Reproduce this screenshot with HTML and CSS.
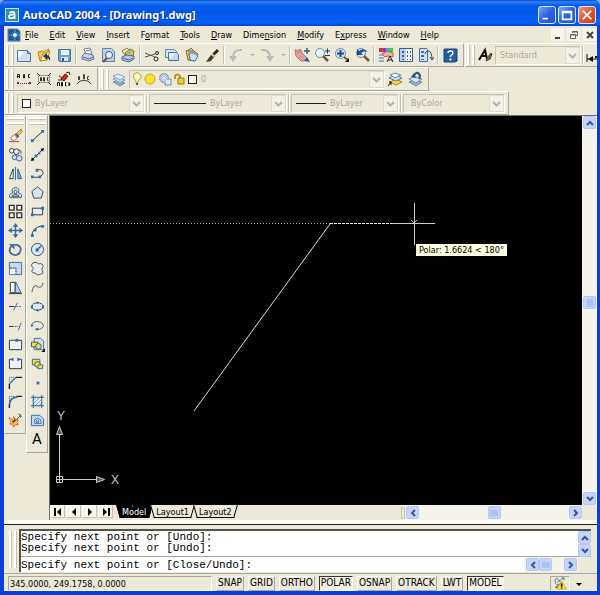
FILE: index.html
```html
<!DOCTYPE html>
<html lang="en">
<head>
    <meta charset="UTF-8">
    <title>AutoCAD 2004 - [Drawing1.dwg]</title>
    <link rel="stylesheet" href="styles.css">
</head>
<body>
    <div class="window">
        <header class="title">
            <svg class="logo" viewBox="0 0 16 16"><rect width="16" height="16" fill="#dff3fa"/><rect x="1" y="1" width="14" height="14" fill="#2a8fb0"/><path d="M5 5.500Q11 2.500 11 7V12.500M11 7.500Q4.500 7 4.500 10T11 10.500" fill="none" stroke="#fff" stroke-width="2"/></svg>
            <h1>AutoCAD 2004 - [Drawing1.dwg]</h1>
            <div class="controls">
                <button aria-label="Minimize"><svg viewBox="0 0 16 16"><path d="M3 11h6v2H3z" fill="#fff"/></svg></button>
                <button aria-label="Maximize"><svg viewBox="0 0 16 16"><path d="M3 4h10v9H3zM3 5h10" fill="none" stroke="#fff" stroke-width="2"/></svg></button>
                <button class="close" aria-label="Close"><svg viewBox="0 0 16 16"><path d="M3 3l10 10M13 3L3 13" stroke="#fff" stroke-width="2"/></svg></button>
            </div>
        </header>

        <nav class="menu">
            <svg class="doc" viewBox="0 0 16 16"><path d="M1 1h11l3 3v11H1z" fill="#1c5792" stroke="#7b9cb8"/><path d="M9 2v12M3 8h12M6 5l6 6M12 5l-6 6" stroke="#62c8f5"/><path d="M7 8h4M9 6v4" stroke="#fff" stroke-width="2"/></svg>
            <a href="#"><u>F</u>ile</a>
            <a href="#"><u>E</u>dit</a>
            <a href="#"><u>V</u>iew</a>
            <a href="#"><u>I</u>nsert</a>
            <a href="#">F<u>o</u>rmat</a>
            <a href="#"><u>T</u>ools</a>
            <a href="#"><u>D</u>raw</a>
            <a href="#">Dime<u>n</u>sion</a>
            <a href="#"><u>M</u>odify</a>
            <a href="#">E<u>x</u>press</a>
            <a href="#"><u>W</u>indow</a>
            <a href="#"><u>H</u>elp</a>
            <div class="mdi">
                <button aria-label="Minimize drawing"><svg viewBox="0 0 12 12"><path d="M3 9h5" stroke="#444" stroke-width="2"/></svg></button>
                <button aria-label="Restore drawing"><svg viewBox="0 0 12 12"><path d="M4.500 4V2.500h5v4H8M2.500 5.500h5v4h-5zM4 3h6M2 6h6" fill="none" stroke="#666"/></svg></button>
                <button aria-label="Close drawing"><svg viewBox="0 0 12 12"><path d="M3 3l6 6M9 3L3 9" stroke="#444" stroke-width="2"/></svg></button>
            </div>
        </nav>

        <div class="row">
            <div class="bar">
                <span class="grip"></span>
                <button aria-label="New"><svg viewBox="0 0 16 16"><path d="M1.500 3.500h10l3 3v8h-13z" fill="#cfe1f7" stroke="#4b78ad"/><path d="M2 4h7l-6 7z" fill="#fff"/><path d="M11.500 3.500v3h3" fill="#8db2dc" stroke="#4b78ad"/></svg></button>
                <button aria-label="Open"><svg viewBox="0 0 16 16"><path d="M2 5l3-1 2 1 6-3-2 11-7 1z" fill="#f7cc4a" stroke="#b58a24"/><path d="M4 14l3-7 7-3-3 9z" fill="#ffe895" stroke="#b58a24"/><path d="M7 9l4-3v2q4 1 3 6-1-3-3-3v2z" fill="#1d3e68"/></svg></button>
                <button aria-label="Save"><svg viewBox="0 0 16 16"><path d="M2.500 2.500h12v12h-11l-1-1z" fill="#6fa0d3" stroke="#3f72aa"/><path d="M5 3h8v5H5z" fill="#e9f2fb"/><path d="M5 10h7v4H5z" fill="#d6e4f3"/><path d="M6 11h2v3H6z" fill="#27598f"/></svg></button>
                <span class="sep"></span>
                <button aria-label="Plot"><svg viewBox="0 0 16 16"><path d="M4 2l6-1 2 6-6 1z" fill="#fff" stroke="#6e7f9c"/><path d="M2 9l3-3 8 2 1 4-5 2-7-2z" fill="#c8d4e7" stroke="#61738f"/><path d="M3 10l6 2 4-2M6 4l4-1" fill="none" stroke="#526684"/></svg></button>
                <button aria-label="Plot preview"><svg viewBox="0 0 16 16"><path d="M2.500 1.500h9l3 3v10h-12z" fill="#bcd3ee" stroke="#5f83ac"/><circle cx="9" cy="8" r="3.500" fill="#e8f4fd" stroke="#3e5673"/><path d="M7 11l-4 4" stroke="#6d5038" stroke-width="2"/></svg></button>
                <button aria-label="Publish"><svg viewBox="0 0 16 16"><path d="M2 4l5-3 3 3-5 4z" fill="#fff3ae" stroke="#8d7c29"/><path d="M5 6l5-4 4 2-1 5-5 1z" fill="#f2c32c" stroke="#8a6e20"/><circle cx="9" cy="5" r="2" fill="#6dbaf0"/><path d="M2 10l4-2 8 1v3l-5 3-7-2z" fill="#b7cbe5" stroke="#476a95"/><path d="M3 11l6 2 4-2" fill="none" stroke="#476a95"/></svg></button>
                <span class="sep"></span>
                <button aria-label="Cut"><svg viewBox="0 0 16 16"><path d="M1 6l10 4M1 10l10-3" fill="none" stroke="#555"/><circle cx="13" cy="6" r="1.500" fill="none" stroke="#222"/><circle cx="12" cy="12" r="2" fill="none" stroke="#222"/></svg></button>
                <button aria-label="Copy"><svg viewBox="0 0 16 16"><path d="M1.500 2.500h9l2 2v6h-11z" fill="#d9e8f8" stroke="#5786ba"/><path d="M4.500 5.500h8l2 2v6h-10z" fill="#c3d9f2" stroke="#4174aa"/><path d="M5 6h6l-5 6z" fill="#f5faff"/></svg></button>
                <button aria-label="Paste"><svg viewBox="0 0 16 16"><path d="M2 4l5-2 7 5-3 7-7-1z" fill="#f4bd43" stroke="#8a6929"/><path d="M5 6h5l4 3-3 5-5-1z" fill="#cae0f8" stroke="#4978a6"/><path d="M4 4l3-3 3 3z" fill="#bfc9d2" stroke="#61717d"/></svg></button>
                <button aria-label="Match properties"><svg viewBox="0 0 16 16"><path d="M9 8l5-5" stroke="#402515" stroke-width="3"/><path d="M7 8l3 2-3 4-5 1 2-3z" fill="#4b3830"/><path d="M8 7l3 3" stroke="#c6b9a7" stroke-width="2"/></svg></button>
                <span class="sep"></span>
                <button aria-label="Undo" disabled><svg viewBox="0 0 16 16"><path d="M14 3Q5 2 5 11" fill="none" stroke="#b8b9bb" stroke-width="2"/><path d="M1 9h8l-4 6z" fill="#b8b9bb"/></svg></button>
                <button class="drop" aria-label="Undo list" disabled><svg viewBox="0 0 8 16"><path d="M2 7h5L4.500 9z" fill="#a8b0bc"/></svg></button>
                <button aria-label="Redo" disabled><svg viewBox="0 0 16 16"><path d="M2 3Q11 2 11 11" fill="none" stroke="#b8b9bb" stroke-width="2"/><path d="M7 9h8l-4 6z" fill="#b8b9bb"/></svg></button>
                <button class="drop" aria-label="Redo list" disabled><svg viewBox="0 0 8 16"><path d="M2 7h5L4.500 9z" fill="#a8b0bc"/></svg></button>
                <span class="sep"></span>
                <button aria-label="Pan"><svg viewBox="0 0 16 16"><path d="M1 3l2 0 2 3V2l2 1 1 3 3 3 2 2-3 3H7L2 9z" fill="#dba197" stroke="#b8766d"/><path d="M10 4h6M13 1v6" stroke="#315c94" stroke-width="1.500"/><path d="M10 14l3-4 3 5z" fill="#315c94"/></svg></button>
                <button aria-label="Zoom realtime"><svg viewBox="0 0 16 16"><circle cx="6" cy="6" r="4.500" fill="#e5f1fb" stroke="#7490ae"/><path d="M9 9l5 5" stroke="#775737" stroke-width="2.500"/><path d="M11 4h5M13.500 1.500v5M11 8.500h5" stroke="#173c6e"/></svg></button>
                <button aria-label="Zoom window"><svg viewBox="0 0 16 16"><circle cx="6.500" cy="6.500" r="5" fill="#cfe2f6" stroke="#7289a7"/><path d="M3 6.500h7M6.500 3v7" stroke="#1f4d82" stroke-width="2"/><path d="M10 10l4 3" stroke="#775737" stroke-width="2"/><path d="M15 11v4h-4z" fill="#111"/></svg></button>
                <button aria-label="Zoom previous"><svg viewBox="0 0 16 16"><circle cx="7" cy="6" r="4.500" fill="#dae8f4" stroke="#7289a7"/><path d="M10 9l5 5" stroke="#775737" stroke-width="2.500"/><path d="M3 8V2l2 2q5-4 9 1-4-2-7 1l2 2z" fill="#204f86"/></svg></button>
                <span class="sep"></span>
                <button aria-label="Properties"><svg viewBox="0 0 16 16"><path d="M1 1h4v4H1z" fill="#e73424"/><path d="M5 1h3v4H5z" fill="#a52bd1"/><path d="M8 1h3v4H8z" fill="#21b9db"/><path d="M11 1h4v4h-4z" fill="#5cc13b"/><path d="M4 7l5-3 6 2v4l-5-1-3 1z" fill="#e4b5a2" stroke="#a36a58"/><path d="M1 8h4M1 11h5M1 14h5" stroke="#3f75ae"/><path d="M9 15l3-6 3 6M10 13h4" fill="none" stroke="#222"/></svg></button>
                <button aria-label="DesignCenter"><svg viewBox="0 0 16 16"><path d="M1.500 1.500h13v13h-13z" fill="#f3f8fc" stroke="#365e8c"/><path d="M2 2h6v12H2z" fill="#b9d0ea"/><path d="M4 4h2v2H4zM4 8h2v2H4zM4 12h2v1H4zM9 4h1v2H9zM12 4h1v2h-1zM9 8h1v2H9zM12 8h1v2h-1zM9 12h1v1H9zM12 12h1v1h-1z" fill="#345d8b"/></svg></button>
                <button aria-label="Tool palettes"><svg viewBox="0 0 16 16"><path d="M1.500 1.500h7l1 1v12h-8z" fill="#d3e3f5" stroke="#426d9d"/><path d="M3 4h3v2H3zM3 8h3v2H3zM3 12h3v1H3z" fill="#426d9d"/><path d="M7 7q1-4 4-3 3 1 3 9M12 10l2 3 2-3" fill="none" stroke="#244c7a"/></svg></button>
                <span class="sep"></span>
                <button aria-label="Help"><svg viewBox="0 0 16 16"><path d="M2 2h13v12l-2 1H2z" fill="#235c9f" stroke="#15477f"/><path d="M6 6q0-2 2.500-2T11 6q0 1-2.500 3v1" fill="none" stroke="#fff" stroke-width="1.500"/><path d="M7.500 11.500h2v2h-2z" fill="#fff"/></svg></button>
            </div>
            <div class="bar grow">
                <span class="grip"></span>
                <button aria-label="Text style"><svg viewBox="0 0 16 16"><path d="M2 13L8 3l2 9M4 9h6" fill="none" stroke="#111" stroke-width="2"/><path d="M14 6l-4 5-1 3 4-2 2-5z" fill="#806449" stroke="#4a3829"/></svg></button>
                <div class="combo style"><select aria-label="Text style name" disabled><option>Standard</option></select></div>
                <span class="sep"></span>
                <button class="cut" aria-label="Dimension style"><svg viewBox="0 0 16 16"><path d="M2 7v8M2 12h14" stroke="#111"/><path d="M3 12l5-3v6zM10 9h6v2h-6z" fill="#111"/></svg></button>
            </div>
        </div>

        <div class="row">
            <div class="bar">
                <span class="grip"></span>
                <button aria-label="Arc text"><svg viewBox="0 0 16 16"><path d="M1.500 7V3.500h2V7M2 5.500h1M7.500 7V3.500h1V7h-1M14 3.500h-1.500v3H14" fill="none" stroke="#222"/><path d="M2 12.500h12" stroke="#6e2020" stroke-dasharray="1 1"/><path d="M1 11h2v2H1zM13 11h2v2h-2z" fill="#902222"/></svg></button>
                <button aria-label="Text fit"><svg viewBox="0 0 16 16"><path d="M2.500 4.500h11v7h-11z" fill="none" stroke="#999"/><path d="M4.500 10V6.500h1V10M7.500 6.500h1V10h-1zM12.500 6.500h-1v3h1M1 2l3 3M15 2l-3 3M1 14l3-3M15 14l-3-3" fill="none" stroke="#333"/></svg></button>
                <button aria-label="Text mask"><svg viewBox="0 0 16 16"><path d="M5 8l4-5 3 2-4 5z" fill="#d62920" stroke="#6e1511"/><path d="M10 2l3-1 1 3M3 5l3 2M2 9h4" stroke="#222" fill="none"/><path d="M1.500 15v-3.500h2V15M5.500 11.500h1V15h-1zM10.500 11.500h-1V15h1M13 11.500q2 1.500 0 3.500z" fill="none" stroke="#111"/></svg></button>
                <button aria-label="Explode text"><svg viewBox="0 0 16 16"><path d="M2.500 9V5.500h1V9M7.500 3.500h1V8h-1zM13 5.500h-1.500v3H13M1 13l3-3q4-1 8 0l3 3" fill="none" stroke="#444"/></svg></button>
            </div>
            <div class="bar">
                <span class="grip"></span>
                <button aria-label="Layer properties"><svg viewBox="0 0 16 16"><path d="M2 11l5-2 7 3-5 3z" fill="#8ba8cc" stroke="#7894b8"/><path d="M2 8l5-2 7 3-5 3z" fill="#c1d5ea" stroke="#7f9bbd"/><path d="M2 5l5-2 7 3-5 3z" fill="#dceafb" stroke="#8ba6c6"/></svg></button>
                <div class="combo layer">
                    <svg viewBox="0 0 56 16"><path d="M4 10q-4-4-2-7 3-3 6 0t-2 7v2H4z" fill="#fffac0" stroke="#b4a139"/><path d="M4 13h2" stroke="#555" stroke-width="2"/><circle cx="18" cy="8" r="5" fill="#ffe226" stroke="#c2aa2b"/><circle cx="32" cy="7" r="4.500" fill="#a7bfd8" stroke="#7390b1"/><path d="M32 2v10M27 7h10M29 4l6 6M35 4l-6 6" stroke="#d6e5f4"/><path d="M35 8h4v6h-6v-3" fill="#dce7f4" stroke="#6f8fb3"/><path d="M43 8V5q2-3 5 0v3" fill="none" stroke="#b89a1c" stroke-width="2"/><path d="M46 7h6v6h-6z" fill="#f2cd2d" stroke="#9c7e16"/></svg>
                    <span class="swatch"></span>
                    <select aria-label="Layer" disabled><option>0</option></select>
                </div>
                <button aria-label="Make object's layer current"><svg viewBox="0 0 16 16"><path d="M3 11l6-3 6 3-6 3z" fill="#ffd838" stroke="#a78117"/><path d="M2 7l6-3 7 3-6 3z" fill="#d6e6f7" stroke="#55779f"/><path d="M3 4l5-2 6 2-6 3z" fill="#f0f6fc" stroke="#6788ae"/><path d="M1 15l3-4M2 11h2v3" fill="none" stroke="#111"/></svg></button>
                <button aria-label="Layer previous"><svg viewBox="0 0 16 16"><path d="M2 11l5-2 8 2-6 4z" fill="#94afd0" stroke="#6b8bb2"/><path d="M2 8l5-2 8 2-6 4z" fill="#d6e6f7" stroke="#6b8bb2"/><path d="M4 6l3-4 2 5z" fill="#275890"/><path d="M7 5q2-5 5-2 2 2 0 5" fill="none" stroke="#275890" stroke-width="2"/></svg></button>
            </div>
        </div>

        <div class="row">
            <div class="bar props">
                <span class="grip"></span>
                <div class="combo color"><span class="swatch"></span><select aria-label="Color" disabled><option>ByLayer</option></select></div>
                <span class="sep"></span>
                <div class="combo linetype"><span class="line"></span><select aria-label="Linetype" disabled><option>ByLayer</option></select></div>
                <span class="sep"></span>
                <div class="combo weight"><span class="line short"></span><select aria-label="Lineweight" disabled><option>ByLayer</option></select></div>
                <span class="sep"></span>
                <div class="combo plot"><select aria-label="Plot style" disabled><option>ByColor</option></select></div>
            </div>
        </div>

        <main class="work">
            <div class="tools">
                <span class="grip flat"></span>
                <button aria-label="Erase"><svg viewBox="0 0 16 16"><path d="M9 6l5-5 1 3-4 4z" fill="#f8ca3f" stroke="#a77a22"/><path d="M7 7l2-2 3 4-2 2z" fill="#3f6ba5"/><path d="M3 10l4-3 3 4-3 2H4z" fill="#f7f7f7" stroke="#b07065"/><path d="M1 14.500h11" stroke="#c43f32"/></svg></button>
                <button aria-label="Copy object"><svg viewBox="0 0 16 16"><circle cx="4" cy="4" r="2.500" fill="#eee" stroke="#333"/><circle cx="9" cy="5" r="3" fill="#eee" stroke="#333"/><circle cx="7" cy="11" r="2.500" fill="#cfe2f7" stroke="#345d8c"/><circle cx="12" cy="12" r="3" fill="#cfe2f7" stroke="#345d8c"/><path d="M12 3q3 1 2 4" fill="none" stroke="#345d8c"/></svg></button>
                <button aria-label="Mirror"><svg viewBox="0 0 16 16"><path d="M5.500 3v10.500h-4z" fill="#fff" stroke="#333"/><path d="M10.500 3v10.500h4z" fill="#80acd9" stroke="#315d8c"/><path d="M8 1v14" stroke="#2a66a5"/></svg></button>
                <button aria-label="Offset"><svg viewBox="0 0 16 16"><path d="M2 13.500q-2-4 3-5-2-5 3-6 5 1 3 6 5 1 3 5z" fill="#c9def3" stroke="#2d69a6"/><path d="M4 12q0-1 4-2Q5 6 8 5.500 11 6 8 10q4 1 4 2z" fill="#eee" stroke="#444"/></svg></button>
                <button aria-label="Array"><svg viewBox="0 0 16 16"><path d="M1.500 1.500h5v5h-5zM9.500 1.500h5v5h-5zM1.500 9.500h5v5h-5zM9.500 9.500h5v5h-5z" fill="#edf3f7" stroke="#333" stroke-width="1.500"/></svg></button>
                <button aria-label="Move"><svg viewBox="0 0 16 16"><path d="M8 2v12M2 8h12" stroke="#356ba8" stroke-width="1.500"/><path d="M8 0l3 4H5zM8 16l3-4H5zM0 8l4-3v6zM16 8l-4-3v6z" fill="#356ba8"/></svg></button>
                <button aria-label="Rotate"><svg viewBox="0 0 16 16"><path d="M4 4q-4 4-1 8 5 4 9 0 4-6-2-9L7 3" fill="none" stroke="#486e9b" stroke-width="2"/><path d="M1 2h6v6z" fill="#486e9b"/></svg></button>
                <button aria-label="Scale"><svg viewBox="0 0 16 16"><path d="M1.500 1.500h13v13h-13z" fill="#c3d9f1" stroke="#3e6fa6"/><path d="M2 8h6v6H2z" fill="#f1f5fb"/><path d="M2 7.500h6.500V14" fill="none" stroke="#222" stroke-dasharray="2 1"/></svg></button>
                <button aria-label="Stretch"><svg viewBox="0 0 16 16"><path d="M2.500 2.500h5v11h-5z" fill="#f7f7f7" stroke="#333"/><path d="M8 2l6 11.500H8z" fill="#b5cfea" stroke="#346497"/><path d="M1 14.500h14" stroke="#333"/></svg></button>
                <button aria-label="Trim"><svg viewBox="0 0 16 16"><path d="M1 8h6" stroke="#333"/><path d="M9 8h6" stroke="#2d67a6" stroke-dasharray="2 1"/><path d="M6 12l4-8" stroke="#2d67a6"/></svg></button>
                <button aria-label="Extend"><svg viewBox="0 0 16 16"><path d="M1 9h5" stroke="#333"/><path d="M7 9h4" stroke="#2d67a6" stroke-dasharray="2 1"/><path d="M11 13l3-8" stroke="#2d67a6"/></svg></button>
                <button aria-label="Break at point"><svg viewBox="0 0 16 16"><path d="M1.500 3.500h13v10h-13z" fill="#edf2f7" stroke="#333"/><path d="M8 2h3v3H8z" fill="#246cb5"/></svg></button>
                <button aria-label="Break"><svg viewBox="0 0 16 16"><path d="M5 3.500H1.500v10h13v-10H11" fill="#edf2f7" stroke="#333"/><path d="M4 2h2v3H4zM10 2h2v3h-2z" fill="#246cb5"/></svg></button>
                <button aria-label="Chamfer"><svg viewBox="0 0 16 16"><path d="M1.500 15V9M8 2.500h7" stroke="#222" stroke-width="1.500"/><path d="M2 9l6-6" stroke="#2c71bb" stroke-width="1.500"/><path d="M1.500 7V2.500H7" fill="none" stroke="#444" stroke-dasharray="1 1"/></svg></button>
                <button aria-label="Fillet"><svg viewBox="0 0 16 16"><path d="M1.500 15v-5M9 2.500h6" stroke="#222" stroke-width="1.500"/><path d="M2 10q0-6 8-7" fill="none" stroke="#2c71bb" stroke-width="2"/><path d="M1.500 7V2.500H7" fill="none" stroke="#444" stroke-dasharray="1 1"/></svg></button>
                <button aria-label="Explode"><svg viewBox="0 0 16 16"><path d="M1 5l4 2 1-3 2 3 3 0-1 3 1 3-3-1-2 3-1-3-3 0 1-3z" fill="#f9bf4a" stroke="#d13e23" stroke-dasharray="2 1"/><path d="M5 10l3-3" stroke="#8f241b" stroke-width="2"/><path d="M9 7l4-4M11 1l4 3M13 1v4" stroke="#4a5460"/></svg></button>
            </div>
            <div class="tools draw">
                <span class="grip flat"></span>
                <button aria-label="Line"><svg viewBox="0 0 16 16"><path d="M3 13L13 4" stroke="#222"/><path d="M1 12h3v3H1zM12 2h3v3h-3z" fill="#2c72bf"/></svg></button>
                <button aria-label="Construction line"><svg viewBox="0 0 16 16"><path d="M2 14L14 2" stroke="#222"/><path d="M1 15l1-4 3 3zM15 1l-1 4-3-3z" fill="#111"/><path d="M5 8h3v3H5zM9 5h2v3H9z" fill="#2c72bf"/></svg></button>
                <button aria-label="Polyline"><svg viewBox="0 0 16 16"><path d="M3 12h8M7 4q6-1 7 3 0 3-3 4" fill="none" stroke="#444"/><path d="M1 10h3v3H1zM9 10h3v3H9zM6 3h3v3H6z" fill="#2c72bf"/></svg></button>
                <button aria-label="Polygon"><svg viewBox="0 0 16 16"><path d="M8 2l6 5-2 7H4L2 7z" fill="#d6e5f1" stroke="#3c4854"/></svg></button>
                <button aria-label="Rectangle"><svg viewBox="0 0 16 16"><path d="M2.500 4.500h11v7h-11z" fill="#e5eef5" stroke="#333"/><path d="M1 10h3v3H1zM12 3h3v3h-3z" fill="#2c72bf"/></svg></button>
                <button aria-label="Arc"><svg viewBox="0 0 16 16"><path d="M2 14q0-9 11-11" fill="none" stroke="#333"/><path d="M1 12h3v3H1zM4 6h3v3H4zM12 2h3v3h-3z" fill="#2c72bf"/></svg></button>
                <button aria-label="Circle"><svg viewBox="0 0 16 16"><circle cx="8" cy="8" r="6.500" fill="#dbe9f5" stroke="#38485a"/><path d="M8 8l4-4" stroke="#2468ae" stroke-width="1.500"/><path d="M6 7h3v3H6z" fill="#2468ae"/></svg></button>
                <button aria-label="Revision cloud"><svg viewBox="0 0 16 16"><path d="M4 8Q0 5 3 2q4-2 6 1 5-1 5 3-2 2-1 4 2 4-2 4-4 2-5-1-4 0-4-2 0-2 2-3z" fill="#e4edf3" stroke="#454e57"/></svg></button>
                <button aria-label="Spline"><svg viewBox="0 0 16 16"><path d="M2 13q2-10 6-6 4 3 6-4" fill="none" stroke="#555"/></svg></button>
                <button aria-label="Ellipse"><svg viewBox="0 0 16 16"><ellipse cx="8" cy="8" rx="6" ry="4" fill="#dceaf3" stroke="#30445b"/><path d="M1 7h2v3H1zM13 7h2v3h-2zM7 3h2v2H7zM7 11h2v2H7z" fill="#2468ae"/></svg></button>
                <button aria-label="Ellipse arc"><svg viewBox="0 0 16 16"><path d="M2 7q2-4 7-3 6 1 5 5-2 4-7 3" fill="none" stroke="#49617b"/><path d="M1 7h2v2H1zM6 11h3v2H6z" fill="#2468ae"/></svg></button>
                <button aria-label="Insert block"><svg viewBox="0 0 16 16"><path d="M4.500 1.500h7l3 3v9h-10z" fill="#cfe0f3" stroke="#426d9e"/><path d="M1.500 5.500h7v5h-7z" fill="#f7de52" stroke="#3d5367"/><circle cx="9" cy="10" r="3" fill="#f4dc55" stroke="#34526c"/><path d="M16 12v4h-4z" fill="#111"/></svg></button>
                <button aria-label="Make block"><svg viewBox="0 0 16 16"><path d="M2.500 3.500h8v6h-8z" fill="#f7de52" stroke="#41617c"/><circle cx="8" cy="9" r="3" fill="#f8e46c" stroke="#34526c"/><path d="M8.500 9.500h5v4h-5z" fill="#f7de52" stroke="#426d9e"/></svg></button>
                <button aria-label="Point"><svg viewBox="0 0 16 16"><path d="M7 7h3v3H7z" fill="#2873c0"/></svg></button>
                <button aria-label="Hatch"><svg viewBox="0 0 16 16"><path d="M3 3h10v10H3z" fill="#e5eef6"/><path d="M3 7l4-4M3 11l8-8M5 13l8-8M9 13l4-4" stroke="#6c9acb"/><path d="M3.500 1v14M12.500 1v14M1 3.500h14M1 12.500h14" stroke="#2f5a8a"/></svg></button>
                <button aria-label="Region"><svg viewBox="0 0 16 16"><path d="M1.500 2.500h9l4 4v7h-13z" fill="#c1d8ef" stroke="#3a6ca2"/><path d="M5 11V7q3-3 6 0l1 4z" fill="#f3f5f5" stroke="#3a6ca2"/><circle cx="8" cy="9" r="1.500" fill="#9dbde0" stroke="#3a6ca2"/></svg></button>
                <button class="mtext" aria-label="Multiline text">A</button>
            </div>

            <div class="drawing">
                <div class="canvas">
                    <svg class="geometry">
                        <path d="M0 107.500h280" stroke="#aaa" stroke-dasharray="1 2"/>
                        <path d="M280 107.500h84" stroke="#eee" stroke-dasharray="3 1"/>
                        <path d="M280 108L144 295" stroke="#ddd"/>
                        <path d="M364.500 87v42M342 107.500h43" stroke="#ccc"/>
                        <path d="M361 104l3 3 3-3" fill="none" stroke="#bbb"/>
                    </svg>
                    <svg class="ucs" viewBox="0 0 76 96">
                        <g fill="none" stroke="#ccc"><path d="M6.500 67.500h6v6h-6zM9.500 73V26M6 70.500h41"/><path d="M9.500 17.500l-3 8h6zM46.500 67.500v6l8-3z" fill="#555"/></g>
                        <text x="7" y="11">Y</text><text x="61" y="75">X</text>
                    </svg>
                    <div class="tip">Polar: 1.6624 &lt; 180°</div>
                </div>
                <div class="vscroll">
                    <button aria-label="Scroll up"><svg viewBox="0 0 10 10"><path d="M2 7l3-3 3 3"/></svg></button>
                    <span class="before"></span>
                    <button class="thumb" aria-label="Vertical position"><svg viewBox="0 0 10 10"><path d="M2 2h6M2 4h6M2 6h6M2 8h6"/></svg></button>
                    <span class="after"></span>
                    <button aria-label="Scroll down"><svg viewBox="0 0 10 10"><path d="M2 3l3 3 3-3"/></svg></button>
                </div>
                <div class="sheets">
                    <div class="nav">
                        <button aria-label="First"><svg viewBox="0 0 10 10"><path d="M1 1h2v8H1zM8 1v8L4 5z"/></svg></button>
                        <button aria-label="Previous"><svg viewBox="0 0 10 10"><path d="M7 1v8L3 5z"/></svg></button>
                        <button aria-label="Next"><svg viewBox="0 0 10 10"><path d="M3 1v8l4-4z"/></svg></button>
                        <button aria-label="Last"><svg viewBox="0 0 10 10"><path d="M7 1h2v8H7zM2 1v8l4-4z"/></svg></button>
                    </div>
                    <button class="tab on"><span>Model</span></button>
                    <button class="tab"><span>Layout1</span></button>
                    <button class="tab"><span>Layout2</span></button>
                    <div class="hscroll">
                        <span class="split"></span>
                        <button aria-label="Scroll left"><svg viewBox="0 0 10 10"><path d="M7 2L4 5l3 3"/></svg></button>
                        <span class="before"></span>
                        <button class="thumb" aria-label="Horizontal position"><svg viewBox="0 0 10 10"><path d="M2 2v6M4 2v6M6 2v6M8 2v6"/></svg></button>
                        <span class="before"></span>
                        <button aria-label="Scroll right"><svg viewBox="0 0 10 10"><path d="M3 2l3 3-3 3"/></svg></button>
                    </div>
                </div>
            </div>
        </main>

        <section class="command">
            <span class="grip"></span>
            <div class="console">
                <div class="history">
                    <p>Specify next point or [Undo]:<br>Specify next point or [Undo]:</p>
                    <div class="updown">
                        <button aria-label="History up"><svg viewBox="0 0 10 10"><path d="M2 7l3-3 3 3"/></svg></button>
                        <button aria-label="History down"><svg viewBox="0 0 10 10"><path d="M2 3l3 3 3-3"/></svg></button>
                    </div>
                </div>
                <div class="prompt">
                    <input type="text" aria-label="Command line" value="Specify next point or [Close/Undo]:">
                    <div class="hscroll">
                        <button aria-label="Command left"><svg viewBox="0 0 10 10"><path d="M7 2L4 5l3 3"/></svg></button>
                        <button class="thumb" aria-label="Command position"><svg viewBox="0 0 10 10"><path d="M2 2v6M4 2v6M6 2v6M8 2v6"/></svg></button>
                        <span class="before"></span>
                        <button aria-label="Command right"><svg viewBox="0 0 10 10"><path d="M3 2l3 3-3 3"/></svg></button>
                    </div>
                </div>
            </div>
        </section>

        <footer class="status">
            <output class="coords">345.0000, 249.1758, 0.0000</output>
            <button>SNAP</button>
            <button>GRID</button>
            <button>ORTHO</button>
            <button class="on">POLAR</button>
            <button>OSNAP</button>
            <button>OTRACK</button>
            <button>LWT</button>
            <button class="on">MODEL</button>
            <div class="tray">
                <svg class="comm" viewBox="0 0 16 16"><path d="M2 3q2-3 4 0l5 7H6Q1 9 2 3z" fill="#d3dfed" stroke="#526d91"/><path d="M5 6l6-4M10 1h3v3M2 13h8l-3-4z" fill="#809bc0" stroke="#526d91"/><path d="M10 5l6 10H4z" fill="#ffe226" stroke="#d2a70f"/><path d="M10 8v4M10 13v1" stroke="#111" stroke-width="2"/></svg>
                <button class="drop" aria-label="Tray menu"><svg viewBox="0 0 8 16"><path d="M1 8h6L4 11z"/></svg></button>
            </div>
        </footer>
    </div>
</body>
</html>
```
FILE: styles.css
```css
*{
    box-sizing: border-box;
    margin: 0;
    padding: 0;
}
body{
    background: #8ba6e0;
    color: #000;
    font: 9px/12px "DejaVu Sans Condensed", "DejaVu Sans", sans-serif;
}
button, select, input{
    font: inherit;
    color: inherit;
    border: 0;
    background: none;
    appearance: none;
}
button{
    display: flex;
    align-items: center;
    justify-content: center;
    flex: none;
}
svg{
    display: block;
    flex: none;
}
.window{
    display: flex;
    flex-direction: column;
    height: 100vh;
    padding: 0 3px 4px 4px;
    background: #0a3ddc;
    border-radius: 6px 6px 0 0;
    overflow: hidden;
}

/* title bar */
.title{
    display: flex;
    align-items: center;
    gap: 4px;
    height: 26px;
    flex: none;
    margin: 0 -3px 0 -4px;
    padding: 3px 4px 0 5px;
    background: linear-gradient(#0a48c8, #2f82fa 2px, #0660ee 5px, #0055e6 12px, #0462fa 22px, #0248cc);
}
.logo{
    width: 14px;
    height: 14px;
}
.title h1{
    flex: 1;
    color: #fff;
    font: bold 11px/18px "Noto Sans", sans-serif;
    text-shadow: 1px 1px #0a2a88;
}
.controls{
    display: flex;
    gap: 2px;
}
.controls button{
    width: 18px;
    height: 18px;
    border: 1px solid #dce8ff;
    border-radius: 3px;
    background: linear-gradient(135deg, #7ba5f6, #2a62e4 50%, #2055d6);
}
.controls svg{
    width: 14px;
    height: 14px;
}
.controls .close{
    background: linear-gradient(135deg, #f09a80, #e25430 50%, #cc3e18);
}

/* menu */
.menu{
    display: flex;
    align-items: center;
    gap: 11px;
    height: 17px;
    flex: none;
    padding-left: 3px;
    background: #ece9d8;
}
.doc{
    width: 14px;
    height: 14px;
    margin-right: -7px;
}
.menu a{
    color: #000;
    text-decoration: none;
}
.mdi{
    display: flex;
    gap: 3px;
    margin-left: auto;
    margin-right: 1px;
}
.mdi button{
    width: 13px;
    height: 13px;
    background: #f7f5ec;
}
.mdi svg{
    width: 12px;
    height: 12px;
}

/* toolbars */
.row{
    display: flex;
    gap: 1px;
    height: 24px;
    flex: none;
    background: #ece9d8;
}
.bar{
    display: flex;
    align-items: center;
    padding-right: 3px;
    border: 1px solid;
    border-color: #fff #aca899 #aca899 #fff;
}
.bar.grow{
    flex: 1;
    min-width: 0;
    overflow: hidden;
    padding-right: 0;
    border-right: 0;
}
.grip{
    flex: none;
    width: 7px;
    height: 20px;
    margin: 0 1px;
    border: solid #fff;
    border-width: 0 2px;
    box-shadow: inset -2px 0 #ece9d8, inset -3px 0 #c5c2b0, inset 1px 0 #c5c2b0, 1px 0 #c5c2b0;
}
.bar button{
    width: 20px;
    height: 20px;
}
.bar svg{
    width: 16px;
    height: 16px;
}
.bar .drop{
    width: 11px;
}
.drop svg{
    width: 8px;
    height: 16px;
}
.bar .cut{
    width: 12px;
    justify-content: flex-start;
    overflow: hidden;
}
.sep{
    flex: none;
    width: 4px;
    height: 18px;
    border-left: 1px solid #ece9d8;
    box-shadow: inset 1px 0 #c5c2b0, inset 2px 0 #fff;
}
.combo{
    display: flex;
    align-items: center;
    height: 19px;
    border: 1px solid;
    border-color: #c5c2b0 #fff #fff #c5c2b0;
}
.combo select{
    flex: 1;
    min-width: 0;
    height: 17px;
    padding-left: 4px;
    color: #aca899;
    opacity: 1;
    background: url("data:image/svg+xml,%3Csvg xmlns='http://www.w3.org/2000/svg' width='15' height='17'%3E%3Crect x='.5' y='.5' width='14' height='16' fill='%23f3f1e7' stroke='%23dedbcc'/%3E%3Cpath d='M4 7l3.500 3.500L11 7' fill='none' stroke='%23b8b5a5' stroke-width='2'/%3E%3C/svg%3E") right center no-repeat;
}
.swatch{
    flex: none;
    width: 9px;
    height: 9px;
    border: 1px solid #222;
    background: #fff;
}
.line{
    flex: none;
    width: 52px;
    height: 1px;
    background: #222;
}
.line.short{
    width: 30px;
}
.style{
    width: 86px;
}
.layer{
    width: 256px;
    padding-left: 2px;
}
.combo.layer svg{
    width: 56px;
}
.color{
    width: 128px;
    margin-left: 3px;
    padding-left: 4px;
}
.linetype{
    width: 138px;
    padding-left: 4px;
}
.weight{
    width: 108px;
    padding-left: 4px;
}
.plot{
    width: 102px;
    padding-left: 3px;
}

/* work area */
.work{
    display: flex;
    flex: 1;
    min-height: 0;
    background: #ece9d8;
    border-bottom: 4px solid #fbfaf5;
}
.tools{
    align-self: flex-start;
    display: flex;
    flex-direction: column;
    align-items: center;
    width: 22px;
    padding-bottom: 3px;
    border: 1px solid;
    border-color: #fff #aca899 #aca899 #fff;
}
.tools button{
    width: 19px;
    height: 19px;
}
.tools svg{
    width: 15px;
    height: 15px;
}
.grip.flat{
    width: 17px;
    height: 7px;
    margin: 1px 0 2px;
    border-width: 2px 0;
    box-shadow: inset 0 1px #c5c2b0, 0 1px #c5c2b0;
}
.tools .mtext{
    font: 15px/19px Roboto, sans-serif;
}
.drawing{
    flex: 1;
    min-width: 0;
    display: grid;
    grid-template: 1fr 15px / 1fr 15px;
    margin-left: 1px;
    border: solid #716f64;
    border-width: 1px 0 0 1px;
}
.canvas{
    position: relative;
    overflow: hidden;
    background: #000;
}
.geometry{
    width: 100%;
    height: 100%;
}
.ucs{
    position: absolute;
    left: 0;
    bottom: 0;
    width: 76px;
    height: 96px;
}
.ucs text{
    fill: #ccc;
    font: 12px "Liberation Sans", sans-serif;
}
.tip{
    position: absolute;
    left: 365px;
    top: 127px;
    padding: 0 3px;
    background: #ffffe1;
    border: 1px solid #000;
    white-space: nowrap;
}

/* scroll bars */
.vscroll, .hscroll{
    display: flex;
    background: #f5f3ec;
}
.vscroll{
    flex-direction: column;
    align-items: center;
}
.hscroll{
    align-items: center;
}
.vscroll button, .hscroll button, .updown button{
    width: 13px;
    height: 13px;
    border: 1px solid #b5c8f2;
    border-radius: 2px;
    background: #c3d5fd;
}
.vscroll svg, .hscroll svg, .updown svg{
    width: 10px;
    height: 10px;
    fill: none;
    stroke: #3d5588;
    stroke-width: 2;
}
.vscroll .thumb svg, .hscroll .thumb svg{
    stroke: #94b0ee;
    stroke-width: 1;
}
.before{
    flex: 11;
}
.after{
    flex: 12;
}

/* sheet tabs */
.sheets{
    display: flex;
    align-items: flex-start;
}
.nav{
    display: flex;
    gap: 1px;
    margin-right: 4px;
}
.nav button{
    width: 15px;
    height: 13px;
    background: #f7f5ec;
    border: 1px solid;
    border-color: #fff #c5c2b0 #c5c2b0 #fff;
}
.nav svg{
    width: 10px;
    height: 10px;
}
.tab{
    position: relative;
    height: 13px;
    padding: 0 5px;
}
.tab span{
    position: relative;
    z-index: 1;
}
.tab::before, .tab::after{
    content: "";
    position: absolute;
    top: 0;
    bottom: 0;
    border-bottom: 1px solid #000;
    background: #ece9d8;
}
.tab::before{
    left: 1px;
    right: 50%;
    border-left: 1px solid #000;
    transform: skewX(16deg);
}
.tab::after{
    left: 40%;
    right: 1px;
    border-right: 1px solid #000;
    transform: skewX(-16deg);
}
.tab.on{
    color: #fff;
}
.tab.on::before, .tab.on::after{
    background: #000;
}
.sheets .hscroll{
    width: 34%;
    height: 15px;
    margin-left: auto;
}
.split{
    width: 4px;
    height: 12px;
    margin-right: 1px;
    border: 1px solid #c5c2b0;
    background: #ece9d8;
}

/* command window */
.command{
    display: flex;
    gap: 2px;
    flex: none;
    padding: 4px 6px 1px 4px;
    background: #ece9d8;
    border-top: 1px solid #222;
}
.command .grip{
    height: 37px;
    margin-top: 2px;
}
.console{
    flex: 1;
    min-width: 0;
    border: solid #55534b;
    border-width: 2px 0 0 2px;
    font: 11px/11px "Liberation Mono", monospace;
}
.history{
    display: flex;
    justify-content: space-between;
    height: 26px;
    padding-top: 1px;
    background: #fff;
    border-bottom: 1px solid #aca899;
}
.updown{
    display: flex;
    flex-direction: column;
    margin-top: -1px;
}
.prompt{
    display: flex;
    height: 15px;
    padding-right: 13px;
}
.prompt input{
    flex: 1;
    min-width: 0;
    background: #fff;
}
.prompt .hscroll{
    width: 54px;
    padding: 0 1px 0 2px;
}

/* status bar */
.status{
    display: flex;
    align-items: center;
    gap: 4px;
    height: 18px;
    flex: none;
    padding: 1px 4px 0;
    background: #ece9d8;
    border-top: 1px solid #aca899;
    font-size: 10px;
}
.status > button{
    height: 15px;
    padding: 0 1px;
    border: 1px solid;
    border-color: #fff #aca899 #aca899 #fff;
}
.status > .on{
    background: #f4f2e8;
    border-color: #333 #fff #fff #333;
}
.coords{
    width: 204px;
    height: 15px;
    padding-left: 1px;
    border: 1px solid;
    border-color: #aca899 #fff #fff #aca899;
    font-size: 9px;
    line-height: 14px;
}
.tray{
    display: flex;
    align-items: center;
    gap: 5px;
    height: 15px;
    margin: 0 10px 0 auto;
}
.comm{
    width: 20px;
    height: 15px;
    border: 1px solid;
    border-color: #aca899 #fff #fff #aca899;
}
```
